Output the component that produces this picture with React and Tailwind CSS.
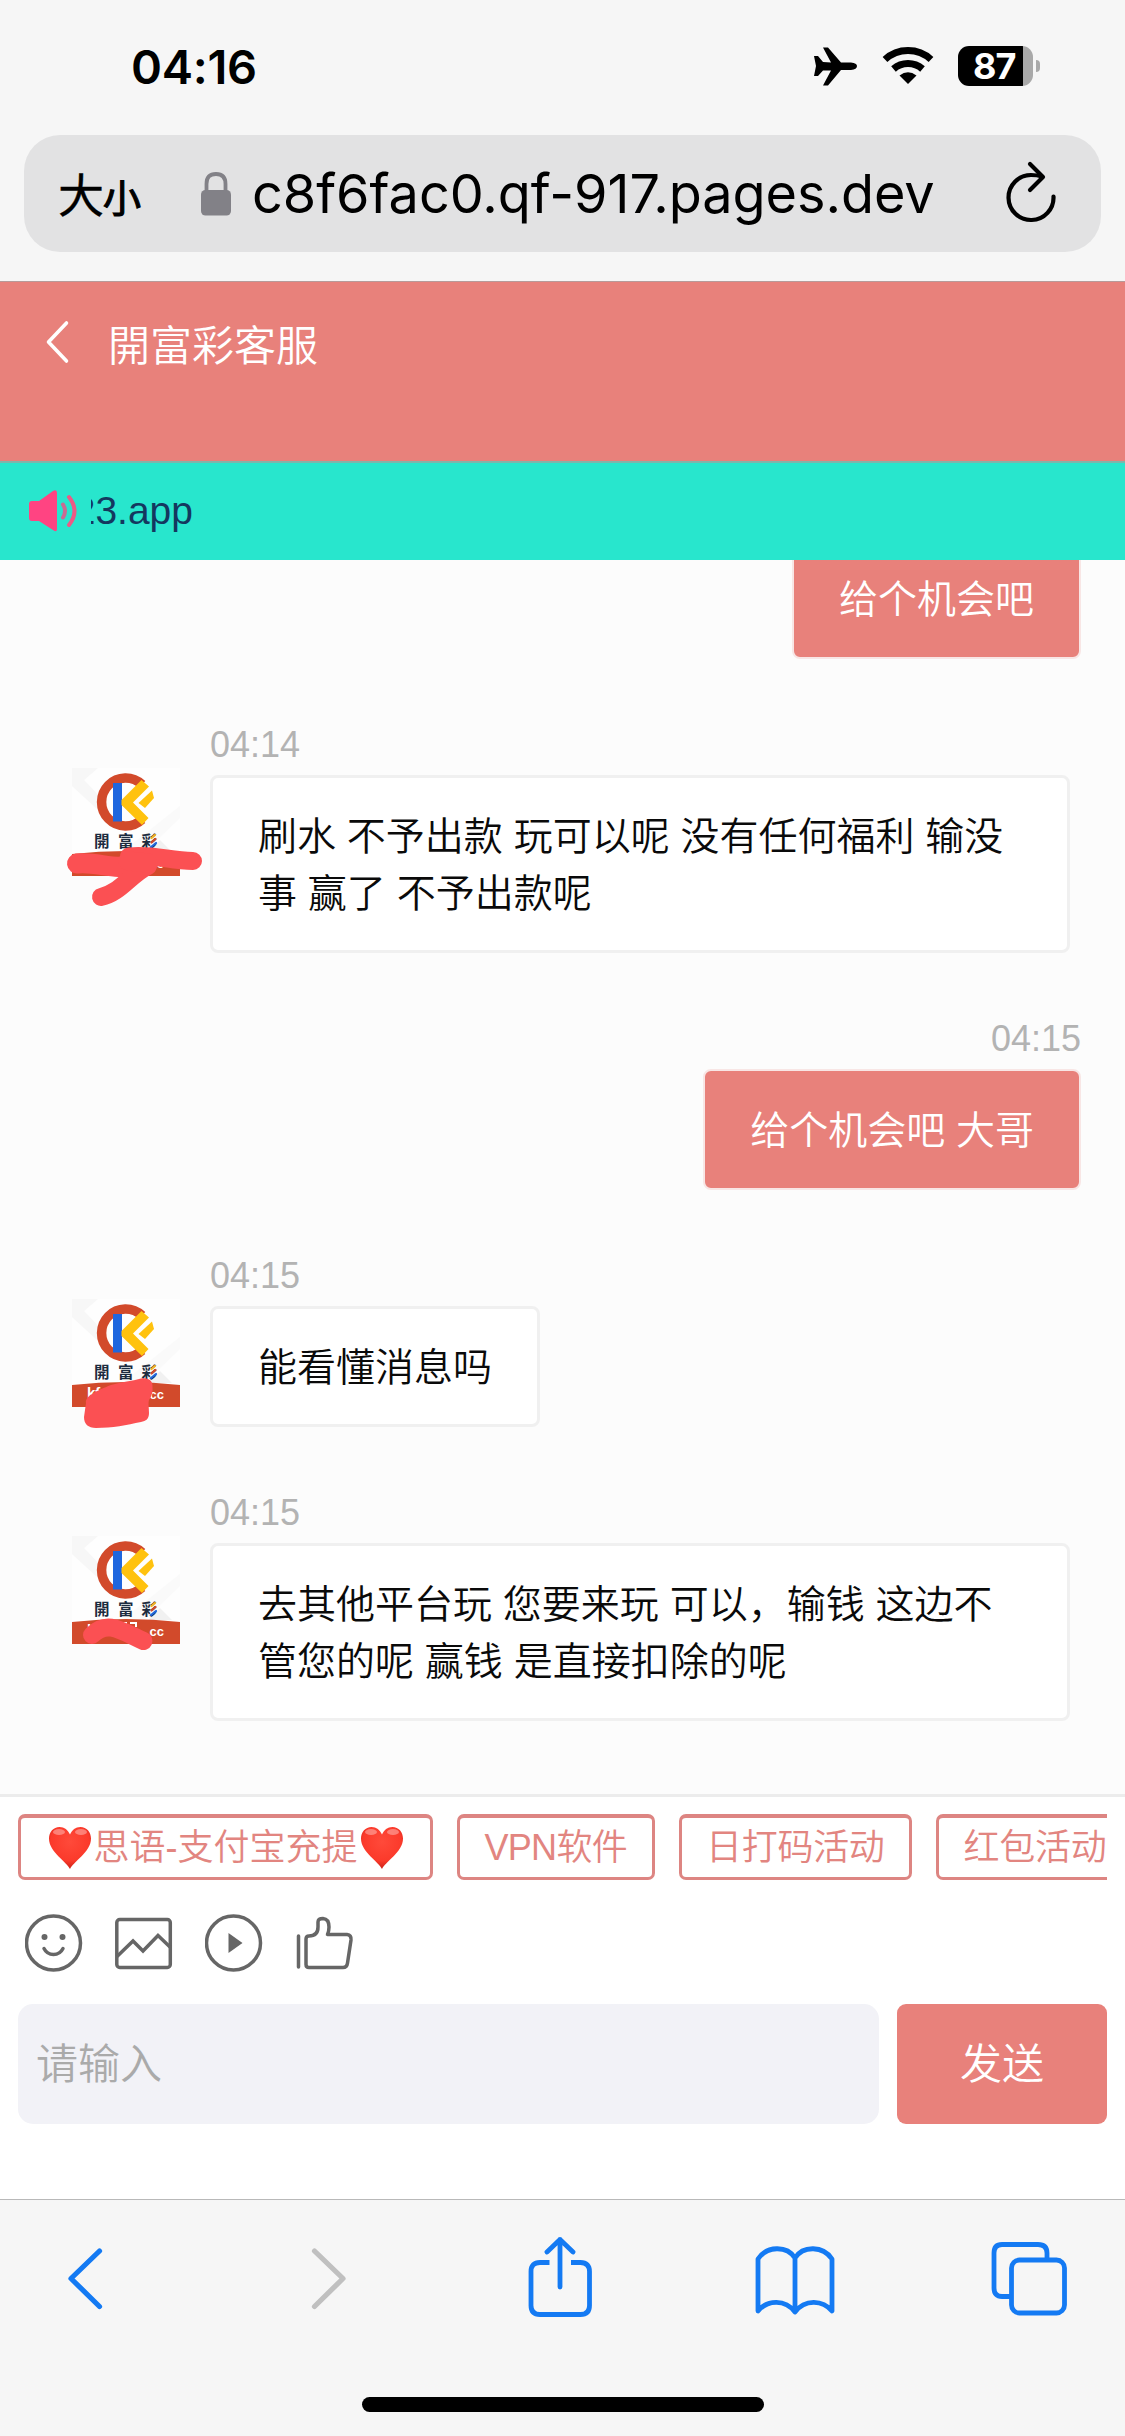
import React from "react";

const SCRIBBLES = {
  strokes: (
    <g fill="none" stroke="#fb5053" strokeLinecap="round" strokeLinejoin="round">
      <path d="M5 95.5C24 93 44 103 62 97" strokeWidth="20" />
      <path d="M57 88.500C82 86 98 93 121 93" strokeWidth="18" />
      <path d="M76 98C58 107 48 125 29 129" strokeWidth="18" />
      <path d="M56 93L76 95" strokeWidth="19" />
    </g>
  ),
  block: (
    <path
      fill="#fb5053"
      d="M14 104C13 97 24 92 39 86C50 83 60 82 69 79.500C77 78 81 82 80.500 88C81 92 80 97 77 101C76 105 77 108 77 114C77 120 74 122 69 123C55 126 40 129 24 129C16 129 12 125 12 118Z"
    />
  ),
  wave: (
    <path
      d="M20 99C35 84 48 94 71.500 105"
      fill="none"
      stroke="#fb5053"
      strokeWidth="18"
      strokeLinecap="round"
    />
  ),
};

function Avatar({ scribble }) {
  return (
    <svg className="block h-[108px] w-[108px] overflow-visible" viewBox="0 0 108 108">
      <rect width="108" height="108" fill="#fefefe" />
      <path d="M0 0H26L12 12L32 33L24 40L0 18Z" fill="#f7f7f7" />
      <path d="M108 38V50L64 92H40Z" fill="#fafafa" />
      <path d="M88 72L100 84H76Z" fill="#f1f1f1" />
      <path
        d="M70 16.500A24 24 0 1 0 70 51.500"
        fill="none"
        stroke="#d24a2b"
        strokeWidth="9.500"
      />
      <rect x="41" y="15" width="9" height="38.500" fill="#1f66de" />
      <path d="M69.500 12L77 18.500L61 34.500L76.500 50L70 57L49.500 37V32Z" fill="#ffc20e" />
      <path d="M66.500 35L80 22.500L82 30L73 40Z" fill="#ffc20e" />
      <g
        fill="#1d2c40"
        fontFamily="'Noto Sans CJK TC', sans-serif"
        fontSize="15.500"
        fontWeight="700"
      >
        <text x="22" y="79">開</text>
        <text x="46" y="79">富</text>
        <text x="69.500" y="79">彩</text>
      </g>
      <g strokeWidth="2.200" strokeLinecap="round">
        <path d="M79.500 70L83 67" stroke="#f6b420" />
        <path d="M79.500 74.500L83.500 71" stroke="#d24a2b" />
        <path d="M79 79L84 75" stroke="#1f66de" />
      </g>
      <path d="M0 86Q54 80 108 86V108H0Z" fill="#d24a2b" />
      <g fill="#ffffff" fontFamily="'Liberation Sans', sans-serif" fontWeight="700">
        <text x="15" y="99" fontSize="15">kf</text>
        <text x="74" y="99.500" fontSize="13">.cc</text>
      </g>
      <path d="M49 87H55M58 87H64V91" fill="none" stroke="#fff" strokeWidth="2" />
      {SCRIBBLES[scribble]}
    </svg>
  );
}

function Incoming({ time, scribble, text }) {
  return (
    <div className="flex pl-[72px]">
      <div className="w-[138px] shrink-0 pt-[109px]">
        <Avatar scribble={scribble} />
      </div>
      <div className="flex flex-col items-start">
        <div className="flex h-[116px] items-end pb-[10px]">
          <span className="text-[36px] leading-[40px] text-[#b3b3b3]">{time}</span>
        </div>
        <div className="max-w-[860px] rounded-[8px] border-[3px] border-[#f0f0f0] bg-white px-[45px] pb-[28px] pt-[30px]">
          <p className="text-[39px] font-[350] leading-[57px] text-[#0a0a0a]">{text}</p>
        </div>
      </div>
    </div>
  );
}

function Outgoing({ time, text }) {
  return (
    <div className="flex flex-col items-end pr-[44px]">
      <div className="flex h-[116px] items-end pb-[10px]">
        <span className="text-[36px] leading-[40px] text-[#b3b3b3]">{time}</span>
      </div>
      <div className="rounded-[8px] border-2 border-[#f8e6e5] bg-[#e8817b] px-[45px] pb-[29px] pt-[31px]">
        <p className="whitespace-nowrap text-[39px] font-[350] leading-[57px] text-white">{text}</p>
      </div>
    </div>
  );
}

function Heart({ id }) {
  return (
    <svg className="h-[44px] w-[48px] shrink-0" viewBox="0 0 48 44">
      <defs>
        <radialGradient id={id} cx="0.5" cy="0.35" r="0.65">
          <stop offset="0" stopColor="#ff4a3a" />
          <stop offset="0.7" stopColor="#fb3a2b" />
          <stop offset="1" stopColor="#c92118" />
        </radialGradient>
      </defs>
      <path
        d="M24 43C21 36 3 26 3 12.500C3 6 7.500 1 13.500 1C18.500 1 22 4 24 8.500C26 4 29.500 1 34.500 1C40.500 1 45 6 45 12.500C45 26 27 36 24 43Z"
        fill={`url(#${id})`}
      />
      <ellipse cx="13" cy="6" rx="6" ry="3" fill="#fff" opacity="0.35" />
      <ellipse cx="35" cy="6" rx="6" ry="3" fill="#fff" opacity="0.35" />
    </svg>
  );
}

function Chip({ className = "tracking-[-0.3px]", children }) {
  return (
    <div
      className={`flex h-[66px] shrink-0 items-center whitespace-nowrap rounded-[7px] border-[3px] border-t-4 border-[#dd8582] px-[24.500px] text-[36px] font-[350] leading-[54px] text-[#e28580] ${className}`}
    >
      {children}
    </div>
  );
}

function StatusBar() {
  return (
    <div className="flex h-[135px] items-start justify-between pl-[131px] pr-[85px] pt-[38px]">
      <span className="font-['Inter'] text-[47px] font-semibold leading-[58px] tracking-[-0.3px] text-black">
        04:16
      </span>
      <div className="flex pt-[8px]">
        <svg className="h-[40px] w-[44px]" viewBox="0 0 44 40">
          <path d="M0 10H4L9 16L17 16.500L9 1.500H14L27 16.500H37Q43 17 43 20Q43 23.500 37 24H27L14 39.500H9L17 24.500L9 24.500L4 30H0L2 20Z" />
        </svg>
        <svg className="ml-[24px] h-[40px] w-[52px]" viewBox="0 0 52 40">
          <g fill="none" stroke="#000" strokeWidth="7">
            <path d="M3 13.500A34 34 0 0 1 49 13.500" />
            <path d="M11.500 23A22 22 0 0 1 40.500 23" />
          </g>
          <path d="M26 38L17.500 29.500Q26 23 34.500 29.500Z" />
        </svg>
        <div className="ml-[24px] flex h-[40px] w-[75px] items-center rounded-[11px] bg-[linear-gradient(to_right,#000_65px,#a9a9a9_65px)]">
          <span className="ml-[15px] font-['Inter'] text-[36px] font-bold leading-[40px] tracking-[-1px] text-white">
            87
          </span>
        </div>
        <div className="ml-[3px] mt-[14px] h-[12px] w-[4px] rounded-r-full bg-[#a9a9a9]" />
      </div>
    </div>
  );
}

function AddressBar() {
  return (
    <div className="mx-[24px] flex h-[117px] items-center rounded-[36px] bg-[#e2e2e3] text-black">
      <div className="ml-[34px] flex w-[143px] items-baseline font-['Noto_Sans_CJK_SC'] font-normal">
        <span className="text-[46px] leading-[60px] [-webkit-text-stroke:0.4px_#000]">大</span>
        <span className="-ml-px text-[38px] leading-[60px] [-webkit-text-stroke:1.2px_#000]">小</span>
      </div>
      <svg className="h-[44px] w-[30px] shrink-0" viewBox="0 0 30 44">
        <path
          d="M5.500 20V12Q5.500 2 15 2T24.500 12V20"
          fill="none"
          stroke="#828187"
          strokeWidth="3.800"
        />
        <rect y="18" width="30" height="25.500" rx="4.500" fill="#828187" />
      </svg>
      <span className="ml-[21px] w-[682px] shrink-0 whitespace-nowrap font-['Inter'] text-[54px] leading-[70px] tracking-[-0.05px]">
        c8f6fac0.qf-917.pages.dev
      </span>
      <svg className="ml-[72px] h-[62px] w-[50px] shrink-0 -translate-y-[2px]" viewBox="0 0 50 62">
        <g fill="none" stroke="#000" strokeWidth="4.200" strokeLinecap="round" strokeLinejoin="round">
          <path d="M47.500 35.500A22.500 22.500 0 1 1 25 14Q31 14 36 15.500" />
          <path d="M24 3L37 16L24 29" />
        </g>
      </svg>
    </div>
  );
}

function ToolIcons() {
  return (
    <div className="flex h-[62px] items-center gap-[30px] pl-[7px]">
      <svg className="h-[60px] w-[60px]" viewBox="0 0 60 60" fill="none" stroke="#666" strokeWidth="3.500">
        <circle cx="28.500" cy="30" r="27" />
        <circle cx="19.500" cy="24" r="3" fill="#666" stroke="none" />
        <circle cx="37.500" cy="24" r="3" fill="#666" stroke="none" />
        <path d="M19 35.500Q22 41.500 28.500 41.500T38 35.500" strokeLinecap="round" />
      </svg>
      <svg className="h-[60px] w-[60px]" viewBox="0 0 60 60" fill="none" stroke="#666" strokeWidth="3.500">
        <rect x="1.800" y="6.500" width="53.500" height="48" rx="3" />
        <path d="M2 43.500L18 28L28 38L43 22.500L55 34" />
      </svg>
      <svg className="h-[60px] w-[60px]" viewBox="0 0 60 60" fill="none" stroke="#666" strokeWidth="3.500">
        <circle cx="28.500" cy="30" r="27" />
        <path d="M23.500 20L37.500 30L23.500 40Z" fill="#666" stroke="none" />
      </svg>
      <svg className="h-[60px] w-[60px]" viewBox="0 0 60 60" fill="none" stroke="#666" strokeWidth="3.500" strokeLinejoin="round">
        <path d="M3.500 23V54" strokeLinecap="round" />
        <path d="M11 26Q11 23 14 23Q23 23 23 14V9Q23 5.500 28 5.500Q34 6 34 14Q34 18 32.500 21.500H52Q56.500 22 56 27L52.500 50Q52 54.500 48 54.500H14Q11 54.500 11 51.500Z" />
      </svg>
    </div>
  );
}

function BrowserToolbar() {
  return (
    <div className="h-[237px] border-t border-[#b9b9b9] bg-[#f6f6f6]">
      <div className="flex h-[197px] items-start pl-[66px] pt-[36px]">
        <svg className="h-[84px] w-[38px]" viewBox="0 0 38 84" fill="none" stroke="#147af3" strokeWidth="5.200" strokeLinecap="round" strokeLinejoin="round">
          <path d="M33.500 15L5 42.500L33.500 70.500" />
        </svg>
        <svg className="ml-[206px] h-[84px] w-[38px]" viewBox="0 0 38 84" fill="none" stroke="#c0c0c0" strokeWidth="5.200" strokeLinecap="round" strokeLinejoin="round">
          <path d="M4.500 15L33 42.500L4.500 70.500" />
        </svg>
        <svg className="ml-[180px] h-[84px] w-[64px]" viewBox="0 0 64 84" fill="none" stroke="#147af3" strokeWidth="4.800" strokeLinejoin="round">
          <path d="M21.500 26.500H12Q3 26.500 3 35.500V69.500Q3 78.500 12 78.500H52.500Q61.500 78.500 61.500 69.500V35.500Q61.500 26.500 52.500 26.500H43" />
          <path d="M32 51V3.500M19 16L32 3.500L45 16" strokeLinecap="round" />
        </svg>
        <svg className="ml-[163px] h-[84px] w-[80px]" viewBox="0 0 80 84" fill="none" stroke="#147af3" strokeWidth="4.800" strokeLinecap="round" strokeLinejoin="round">
          <path d="M40 22C32 9.500 12 9.500 3 23V75C12 64 30 62.500 40 76C50 62.500 68 64 77 75V23C68 9.500 48 9.500 40 22V76" />
        </svg>
        <svg className="ml-[155px] h-[84px] w-[78px]" viewBox="0 0 78 84" fill="none" stroke="#147af3" strokeWidth="4.800">
          <path d="M20 60.500H12Q4 60.500 4 52V17Q4 8.500 12 8.500H48Q57 8.500 57 17V24" />
          <rect x="21.500" y="24" width="53" height="53" rx="8" />
        </svg>
      </div>
      <div className="mx-auto h-[15px] w-[402px] rounded-full bg-black" />
    </div>
  );
}

export default function App() {
  return (
    <div className="flex h-[2436px] w-[1125px] flex-col overflow-hidden bg-[#f6f6f6] font-['Liberation_Sans','Noto_Sans_CJK_SC',sans-serif]">
      <StatusBar />
      <AddressBar />

      <header className="mt-[29px] flex h-[180px] shrink-0 items-start border-t border-[#b79a99] bg-[#e8817b] pl-[44px] pt-[31px] text-white">
        <svg className="mt-[6px] h-[46px] w-[28px]" viewBox="0 0 28 46" fill="none" stroke="#fff" strokeWidth="3.600" strokeLinecap="round" strokeLinejoin="round">
          <path d="M22.500 4L4.500 23L22.500 42" />
        </svg>
        <h1 className="-mt-px ml-[36px] font-['Noto_Sans_CJK_TC'] text-[42px] font-[350] leading-[62px]">
          開富彩客服
        </h1>
      </header>

      <div className="flex h-[99px] shrink-0 items-center border-t-2 border-[#7fb5ab] bg-[#28e6cd] pb-[1px] pl-[29px]">
        <svg className="h-[44px] w-[52px]" viewBox="0 0 52 44">
          <path d="M0 15Q0 12 3 12H10L24 2Q28 0 28 4V40Q28 44 24 41L10 32H3Q0 32 0 29Z" fill="#ff4482" />
          <g fill="none" strokeWidth="4" strokeLinecap="round">
            <path d="M34 15.500Q38 22 34 28.500" stroke="#c96c93" />
            <path d="M40 8Q51 22 40 36" stroke="#ee5a86" />
          </g>
        </svg>
        <div className="ml-[10px] flex w-[103px] justify-end overflow-hidden whitespace-nowrap pr-[1px]">
          <span className="text-[39px] leading-[50px] text-[#14385f]">23.app</span>
        </div>
      </div>

      <main className="flex h-[1234px] shrink-0 flex-col overflow-hidden bg-[#fcfcfc]">
        <div className="-mt-[138px] shrink-0">
          <Outgoing time="04:14" text="给个机会吧" />
          <Incoming
            time="04:14"
            scribble="strokes"
            text="刷水 不予出款 玩可以呢 没有任何福利 输没事 赢了 不予出款呢"
          />
          <Outgoing time="04:15" text="给个机会吧 大哥" />
          <Incoming time="04:15" scribble="block" text="能看懂消息吗" />
          <Incoming
            time="04:15"
            scribble="wave"
            text="去其他平台玩 您要来玩 可以，输钱 这边不管您的呢 赢钱 是直接扣除的呢"
          />
        </div>
      </main>

      <section className="flex h-[405px] shrink-0 flex-col border-t-[3px] border-[#ececec] bg-white px-[18px] pt-[17px]">
        <div className="flex gap-[24px] overflow-hidden">
          <Chip className="tracking-normal">
            <Heart id="heart-left" />
            思语-支付宝充提
            <Heart id="heart-right" />
          </Chip>
          <Chip className="tracking-[-0.7px]">VPN软件</Chip>
          <Chip>日打码活动</Chip>
          <Chip>红包活动</Chip>
        </div>
        <div className="mt-[32px]">
          <ToolIcons />
        </div>
        <div className="mt-[30px] flex h-[120px] gap-[18px]">
          <div className="flex flex-1 items-center rounded-[15px] bg-[#f2f2f7] pl-[18px] pt-[2px] text-[42px] font-[350] leading-[60px] text-[#aaa]">
            请输入
          </div>
          <div className="flex w-[210px] items-center justify-center rounded-[9px] bg-[#e8817b] pt-[2px] text-[42px] font-[350] leading-[60px] text-white">
            发送
          </div>
        </div>
      </section>

      <BrowserToolbar />
    </div>
  );
}
